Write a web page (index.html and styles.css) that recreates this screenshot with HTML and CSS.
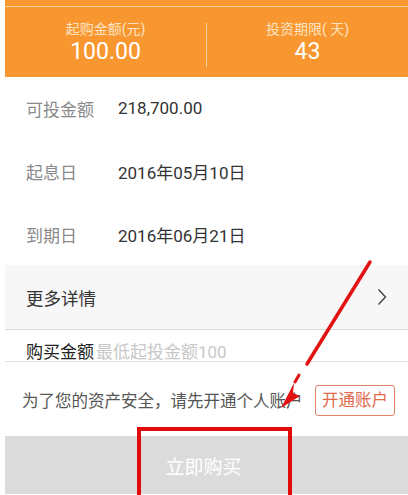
FILE: index.html
```html
<!DOCTYPE html>
<html lang="zh">
<head>
<meta charset="utf-8">
<link rel="stylesheet" href="styles.css">
</head>
<body>
<div class="page">
  <div class="hero">
    <div class="hero-top"></div>
    <div class="stats">
      <div class="stat">
        <div class="stat-label">起购金额(元)</div>
        <div class="stat-value">100.00</div>
      </div>
      <div class="stat-divider"></div>
      <div class="stat">
        <div class="stat-label">投资期限( 天)</div>
        <div class="stat-value">43</div>
      </div>
    </div>
  </div>

  <div class="row row-1"><span class="label">可投金额</span><span class="value">218,700.00</span></div>
  <div class="row row-2"><span class="label">起息日</span><span class="value">2016年05月10日</span></div>
  <div class="row row-3"><span class="label">到期日</span><span class="value">2016年06月21日</span></div>

  <div class="more">
    <span class="more-text">更多详情</span>
    <svg class="chev" width="10" height="18" viewBox="0 0 10 18"><path d="M1.5 1.5 L8.5 9 L1.5 16.5" fill="none" stroke="#444" stroke-width="1.4"/></svg>
  </div>

  <div class="amount"><span class="amount-label">购买金额</span><span class="amount-ph">最低起投金额100</span></div>

  <div class="notice">
    <span class="notice-text">为了您的资产安全，请先开通个人账户</span>
    <span class="open-btn">开通账户</span>
  </div>

  <div class="buy">立即购买</div>

  <div class="mark-box"></div>
  <svg class="arrow" width="408" height="495" viewBox="0 0 408 495">
    <path d="M370 262 L307 364" stroke="#e21212" stroke-width="3.5" stroke-linecap="round" fill="none"/>
    <path d="M299 375 L295 382" stroke="#e21212" stroke-width="3" stroke-linecap="round" fill="none"/>
    <path d="M294 383 L281 408 L300 396 L293 393 Z" fill="#e21212"/>
  </svg>
</div>
</body>
</html>
```

FILE: styles.css
```css
html, body {
  margin: 0;
  padding: 0;
  background: #fff;
}
.page {
  position: relative;
  width: 408px;
  height: 495px;
  overflow: hidden;
  background: #fff;
  font-family: Roboto, "Noto Sans CJK SC", sans-serif;
}
.hero {
  margin-left: 5px;
  height: 77px;
  background: #f8972f;
  display: flex;
  flex-direction: column;
}
.hero-top {
  height: 6px;
  border-bottom: 1px solid rgba(255, 230, 200, 0.75);
}
.stats {
  flex: 1;
  display: flex;
  align-items: center;
}
.stat {
  flex: 1;
  display: flex;
  flex-direction: column;
  align-items: center;
  padding-top: 2px;
}
.stat-label {
  font-size: 14px;
  line-height: 17px;
  color: #fde3c4;
}
.stat-value {
  font-size: 23px;
  line-height: 26px;
  color: #fff;
  margin-top: 1px;
}
.stat-divider {
  width: 1px;
  height: 44px;
  background: rgba(255, 225, 190, 0.8);
  margin-top: 6px;
}
.row {
  display: flex;
  align-items: center;
  padding-left: 26px;
  font-size: 17px;
}
.row-1 { height: 62px; }
.row-2 { height: 64px; }
.row-3 { height: 62px; }
.label {
  width: 92px;
  color: #8a8a8a;
}
.value {
  color: #333;
}
.more {
  margin-left: 5px;
  height: 64px;
  background: #f7f7f7;
  border-bottom: 1px solid #dcdcdc;
  display: flex;
  align-items: center;
  justify-content: space-between;
  padding: 0 21px 0 21px;
}
.more-text {
  font-size: 17.5px;
  color: #333;
}
.amount {
  margin-left: 5px;
  height: 32px;
  overflow: hidden;
  border-bottom: 1px solid #e2e2e2;
  padding-left: 21px;
  box-sizing: border-box;
  display: flex;
  align-items: flex-start;
  padding-top: 12px;
  font-size: 17px;
  line-height: 20px;
}
.amount-label {
  color: #222;
  margin-right: 2px;
}
.amount-ph {
  color: #c8c8c8;
}
.notice {
  height: 74px;
  display: flex;
  align-items: center;
  padding-left: 22px;
  padding-top: 2px;
  box-sizing: border-box;
}
.notice-text {
  font-size: 16.5px;
  color: #555;
  flex: 1;
}
.open-btn {
  margin-right: 13px;
  border: 1px solid #e0826a;
  border-radius: 3px;
  color: #e0684c;
  font-size: 16.5px;
  line-height: 29px;
  padding: 0 6px;
}
.buy {
  margin-left: 5px;
  height: 58px;
  background: #dcdbdb;
  color: #fff;
  font-size: 19px;
  display: flex;
  align-items: center;
  justify-content: center;
  padding-right: 6px;
  box-sizing: border-box;
}
.mark-box {
  position: absolute;
  left: 137px;
  top: 427px;
  width: 155px;
  height: 72px;
  border: 4px solid #e00b0b;
  box-sizing: border-box;
}
.arrow {
  position: absolute;
  left: 0;
  top: 0;
  pointer-events: none;
}
```
